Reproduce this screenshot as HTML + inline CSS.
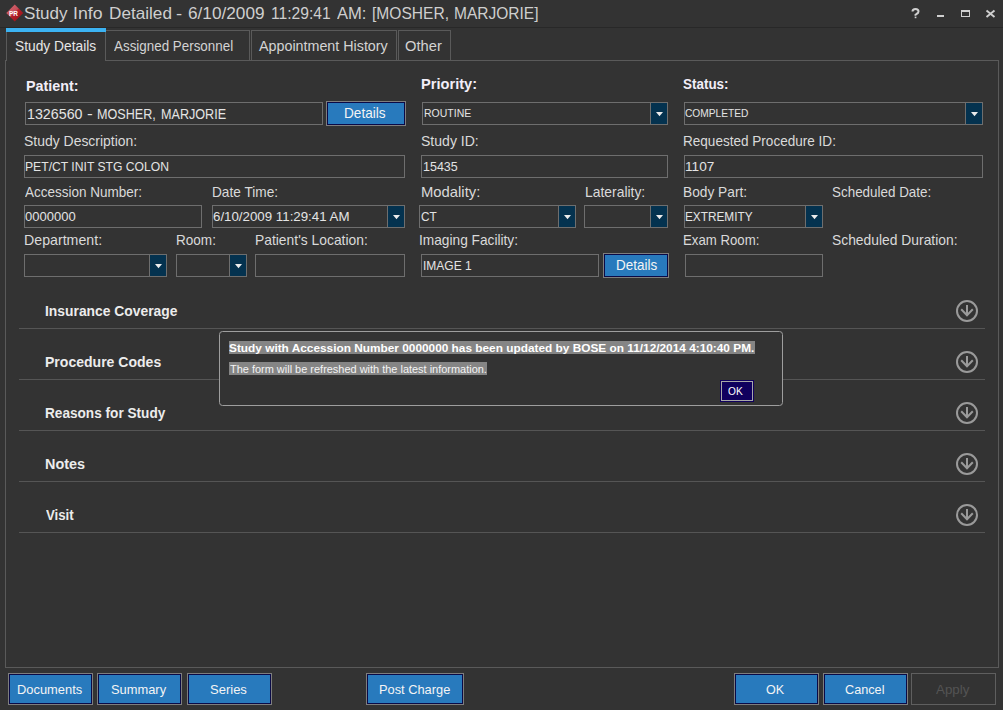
<!DOCTYPE html>
<html><head><meta charset="utf-8"><style>
html,body{margin:0;padding:0;}
body{width:1003px;height:710px;background:#333333;position:relative;overflow:hidden;font-family:"Liberation Sans", sans-serif;}
body>div,body>svg{position:absolute;}
.t{height:0;line-height:0;white-space:nowrap;transform-origin:0 0;}
.t span{display:inline-block;line-height:0;}
</style></head><body>
<div style="left:0px;top:0px;width:1003px;height:27px;background:#333333;"></div>
<div style="left:0px;top:27px;width:1003px;height:1px;background:#282828;"></div>
<div style="left:6px;top:28px;width:100px;height:4px;background:#3cb3f2;"></div>
<div style="left:6px;top:32px;width:1px;height:29px;background:#5a5a5a;"></div>
<div style="left:105px;top:32px;width:1px;height:29px;background:#5a5a5a;"></div>
<div style="left:106px;top:30px;width:144px;height:1px;background:#5a5a5a;"></div>
<div style="left:249px;top:30px;width:1px;height:31px;background:#5a5a5a;"></div>
<div style="left:251px;top:30px;width:146px;height:1px;background:#5a5a5a;"></div>
<div style="left:251px;top:30px;width:1px;height:31px;background:#5a5a5a;"></div>
<div style="left:396px;top:30px;width:1px;height:31px;background:#5a5a5a;"></div>
<div style="left:398px;top:30px;width:53px;height:1px;background:#5a5a5a;"></div>
<div style="left:398px;top:30px;width:1px;height:31px;background:#5a5a5a;"></div>
<div style="left:450px;top:30px;width:1px;height:31px;background:#5a5a5a;"></div>
<div style="left:106px;top:60px;width:893px;height:1px;background:#5a5a5a;"></div>
<div style="left:5px;top:60px;width:1px;height:608px;background:#5a5a5a;"></div>
<div style="left:998px;top:60px;width:1px;height:608px;background:#5a5a5a;"></div>
<div style="left:5px;top:667px;width:994px;height:1px;background:#5a5a5a;"></div>
<div style="left:25px;top:102px;width:298px;height:23px;border:1px solid #6e6e6e;box-sizing:border-box;"></div>
<div style="left:326px;top:101px;width:80px;height:25px;border:1px solid #7e7e7e;box-sizing:border-box;"></div>
<div style="left:327px;top:102px;width:78px;height:23px;border:1px solid #0a0a46;box-sizing:border-box;background:#287abd;"></div>
<div style="left:422px;top:102px;width:246px;height:23px;border:1px solid #6e6e6e;box-sizing:border-box;"></div>
<div style="left:651px;top:103px;width:16px;height:21px;background:#04324f;"></div>
<div style="left:650px;top:102px;width:1px;height:23px;background:#6e6e6e;"></div>
<svg style="position:absolute;left:655.8px;top:112px" width="7" height="5" viewBox="0 0 7 5"><path d="M0 0H7L3.5 4.2Z" fill="#ececec"/></svg>
<div style="left:684px;top:102px;width:299px;height:23px;border:1px solid #6e6e6e;box-sizing:border-box;"></div>
<div style="left:966px;top:103px;width:16px;height:21px;background:#04324f;"></div>
<div style="left:965px;top:102px;width:1px;height:23px;background:#6e6e6e;"></div>
<svg style="position:absolute;left:970.8px;top:112px" width="7" height="5" viewBox="0 0 7 5"><path d="M0 0H7L3.5 4.2Z" fill="#ececec"/></svg>
<div style="left:24px;top:155px;width:381px;height:23px;border:1px solid #6e6e6e;box-sizing:border-box;"></div>
<div style="left:421px;top:155px;width:247px;height:23px;border:1px solid #6e6e6e;box-sizing:border-box;"></div>
<div style="left:684px;top:155px;width:299px;height:23px;border:1px solid #6e6e6e;box-sizing:border-box;"></div>
<div style="left:24px;top:205px;width:178px;height:23px;border:1px solid #6e6e6e;box-sizing:border-box;"></div>
<div style="left:212px;top:205px;width:193px;height:23px;border:1px solid #6e6e6e;box-sizing:border-box;"></div>
<div style="left:388px;top:206px;width:16px;height:21px;background:#04324f;"></div>
<div style="left:387px;top:205px;width:1px;height:23px;background:#6e6e6e;"></div>
<svg style="position:absolute;left:392.8px;top:215px" width="7" height="5" viewBox="0 0 7 5"><path d="M0 0H7L3.5 4.2Z" fill="#ececec"/></svg>
<div style="left:419px;top:205px;width:157px;height:23px;border:1px solid #6e6e6e;box-sizing:border-box;"></div>
<div style="left:559px;top:206px;width:16px;height:21px;background:#04324f;"></div>
<div style="left:558px;top:205px;width:1px;height:23px;background:#6e6e6e;"></div>
<svg style="position:absolute;left:563.8px;top:215px" width="7" height="5" viewBox="0 0 7 5"><path d="M0 0H7L3.5 4.2Z" fill="#ececec"/></svg>
<div style="left:584px;top:205px;width:84px;height:23px;border:1px solid #6e6e6e;box-sizing:border-box;"></div>
<div style="left:651px;top:206px;width:16px;height:21px;background:#04324f;"></div>
<div style="left:650px;top:205px;width:1px;height:23px;background:#6e6e6e;"></div>
<svg style="position:absolute;left:655.8px;top:215px" width="7" height="5" viewBox="0 0 7 5"><path d="M0 0H7L3.5 4.2Z" fill="#ececec"/></svg>
<div style="left:684px;top:205px;width:139px;height:23px;border:1px solid #6e6e6e;box-sizing:border-box;"></div>
<div style="left:806px;top:206px;width:16px;height:21px;background:#04324f;"></div>
<div style="left:805px;top:205px;width:1px;height:23px;background:#6e6e6e;"></div>
<svg style="position:absolute;left:810.8px;top:215px" width="7" height="5" viewBox="0 0 7 5"><path d="M0 0H7L3.5 4.2Z" fill="#ececec"/></svg>
<div style="left:24px;top:254px;width:143px;height:23px;border:1px solid #6e6e6e;box-sizing:border-box;"></div>
<div style="left:150px;top:255px;width:16px;height:21px;background:#04324f;"></div>
<div style="left:149px;top:254px;width:1px;height:23px;background:#6e6e6e;"></div>
<svg style="position:absolute;left:154.8px;top:264px" width="7" height="5" viewBox="0 0 7 5"><path d="M0 0H7L3.5 4.2Z" fill="#ececec"/></svg>
<div style="left:176px;top:254px;width:71px;height:23px;border:1px solid #6e6e6e;box-sizing:border-box;"></div>
<div style="left:230px;top:255px;width:16px;height:21px;background:#04324f;"></div>
<div style="left:229px;top:254px;width:1px;height:23px;background:#6e6e6e;"></div>
<svg style="position:absolute;left:234.8px;top:264px" width="7" height="5" viewBox="0 0 7 5"><path d="M0 0H7L3.5 4.2Z" fill="#ececec"/></svg>
<div style="left:255px;top:254px;width:150px;height:23px;border:1px solid #6e6e6e;box-sizing:border-box;"></div>
<div style="left:421px;top:254px;width:178px;height:23px;border:1px solid #6e6e6e;box-sizing:border-box;"></div>
<div style="left:603px;top:253px;width:66px;height:25px;border:1px solid #7e7e7e;box-sizing:border-box;"></div>
<div style="left:604px;top:254px;width:64px;height:23px;border:1px solid #0a0a46;box-sizing:border-box;background:#287abd;"></div>
<div style="left:685px;top:254px;width:138px;height:23px;border:1px solid #6e6e6e;box-sizing:border-box;"></div>
<div style="left:19px;top:328px;width:966px;height:1px;background:#555555;"></div>
<svg style="position:absolute;left:955px;top:299px" width="24" height="24" viewBox="0 0 24 24"><circle cx="12" cy="12" r="10" fill="none" stroke="#9a9a9a" stroke-width="2"/><path d="M12 6V16.5M6.2 10.3L12 16.3L17.8 10.3" fill="none" stroke="#9a9a9a" stroke-width="2"/></svg>
<div style="left:19px;top:379px;width:966px;height:1px;background:#555555;"></div>
<svg style="position:absolute;left:955px;top:350px" width="24" height="24" viewBox="0 0 24 24"><circle cx="12" cy="12" r="10" fill="none" stroke="#9a9a9a" stroke-width="2"/><path d="M12 6V16.5M6.2 10.3L12 16.3L17.8 10.3" fill="none" stroke="#9a9a9a" stroke-width="2"/></svg>
<div style="left:19px;top:430px;width:966px;height:1px;background:#555555;"></div>
<svg style="position:absolute;left:955px;top:401px" width="24" height="24" viewBox="0 0 24 24"><circle cx="12" cy="12" r="10" fill="none" stroke="#9a9a9a" stroke-width="2"/><path d="M12 6V16.5M6.2 10.3L12 16.3L17.8 10.3" fill="none" stroke="#9a9a9a" stroke-width="2"/></svg>
<div style="left:19px;top:481px;width:966px;height:1px;background:#555555;"></div>
<svg style="position:absolute;left:955px;top:452px" width="24" height="24" viewBox="0 0 24 24"><circle cx="12" cy="12" r="10" fill="none" stroke="#9a9a9a" stroke-width="2"/><path d="M12 6V16.5M6.2 10.3L12 16.3L17.8 10.3" fill="none" stroke="#9a9a9a" stroke-width="2"/></svg>
<div style="left:19px;top:532px;width:966px;height:1px;background:#555555;"></div>
<svg style="position:absolute;left:955px;top:503px" width="24" height="24" viewBox="0 0 24 24"><circle cx="12" cy="12" r="10" fill="none" stroke="#9a9a9a" stroke-width="2"/><path d="M12 6V16.5M6.2 10.3L12 16.3L17.8 10.3" fill="none" stroke="#9a9a9a" stroke-width="2"/></svg>
<div style="left:219px;top:331px;width:564px;height:75px;box-sizing:border-box;border:1px solid #9e9e9e;border-radius:3.5px;background:#333333;"></div>
<div style="left:229px;top:341px;width:526px;height:13px;background:#858585;"></div>
<div style="left:229px;top:362px;width:258px;height:13px;background:#858585;"></div>
<div style="left:720px;top:380px;width:34px;height:22px;border:1px solid #10005e;box-sizing:border-box;background:#10005e;"></div>
<div style="left:721px;top:381px;width:32px;height:20px;border:1px solid #a8a8a8;box-sizing:border-box;"></div>
<div style="left:8px;top:673px;width:85px;height:32px;border:1px solid #7e7e7e;box-sizing:border-box;"></div>
<div style="left:9px;top:674px;width:83px;height:30px;border:1px solid #0a0a46;box-sizing:border-box;background:#287abd;"></div>
<div style="left:97px;top:673px;width:85px;height:32px;border:1px solid #7e7e7e;box-sizing:border-box;"></div>
<div style="left:98px;top:674px;width:83px;height:30px;border:1px solid #0a0a46;box-sizing:border-box;background:#287abd;"></div>
<div style="left:187px;top:673px;width:85px;height:32px;border:1px solid #7e7e7e;box-sizing:border-box;"></div>
<div style="left:188px;top:674px;width:83px;height:30px;border:1px solid #0a0a46;box-sizing:border-box;background:#287abd;"></div>
<div style="left:366px;top:673px;width:98px;height:32px;border:1px solid #7e7e7e;box-sizing:border-box;"></div>
<div style="left:367px;top:674px;width:96px;height:30px;border:1px solid #0a0a46;box-sizing:border-box;background:#287abd;"></div>
<div style="left:734px;top:673px;width:85px;height:32px;border:1px solid #7e7e7e;box-sizing:border-box;"></div>
<div style="left:735px;top:674px;width:83px;height:30px;border:1px solid #0a0a46;box-sizing:border-box;background:#287abd;"></div>
<div style="left:823px;top:673px;width:85px;height:32px;border:1px solid #7e7e7e;box-sizing:border-box;"></div>
<div style="left:824px;top:674px;width:83px;height:30px;border:1px solid #0a0a46;box-sizing:border-box;background:#287abd;"></div>
<div style="left:911px;top:673px;width:85px;height:32px;border:1px solid #5f5f5f;box-sizing:border-box;"></div>
<svg style="position:absolute;left:900px;top:0px" width="103" height="27" viewBox="0 0 103 27"><path d="M12.5 11.5Q12.5 9 15.5 9Q18.5 9 18.5 11.5Q18.5 13 16.5 14L15.5 14.7V15.8" fill="none" stroke="#d0d0d0" stroke-width="2"/><rect x="14.7" y="16.6" width="1.7" height="1.6" fill="#d0d0d0"/><rect x="37" y="15" width="7" height="2" fill="#d0d0d0"/><rect x="61.5" y="10.5" width="8" height="6" fill="none" stroke="#d0d0d0" stroke-width="1"/><rect x="61" y="10" width="9" height="2" fill="#d0d0d0"/><path d="M86.5 10.5L94.5 17M94.5 10.5L86.5 17" stroke="#d0d0d0" stroke-width="1.9"/></svg>
<div style="left:9.25px;top:7.25px;width:11.5px;height:11.5px;transform:rotate(45deg);background:linear-gradient(90deg,#cc5a64 0%,#c44c58 42%,#b51f2a 52%,#a0171f 100%);"></div>
<div class="t" style="left:9px;top:13.6px;font-size:7.8px;color:#fff;font-weight:bold;transform:scaleX(0.82);"><span>PR</span></div>
<div class="t" style="left:24.00px;top:12.78px;font-size:16.5px;transform:scaleX(1.0341);color:#cfcfcf;"><span>Study</span></div>
<div class="t" style="left:73.00px;top:12.78px;font-size:16.5px;transform:scaleX(1.0716);color:#cfcfcf;"><span>Info</span></div>
<div class="t" style="left:109.00px;top:12.78px;font-size:16.5px;transform:scaleX(1.0399);color:#cfcfcf;"><span>Detailed</span></div>
<div class="t" style="left:176.00px;top:12.78px;font-size:16.5px;transform:scaleX(1.1191);color:#cfcfcf;"><span>-</span></div>
<div class="t" style="left:188.00px;top:12.78px;font-size:16.5px;transform:scaleX(1.0431);color:#cfcfcf;"><span>6/10/2009</span></div>
<div class="t" style="left:271.00px;top:12.78px;font-size:16.5px;transform:scaleX(0.9478);color:#cfcfcf;"><span>11:29:41</span></div>
<div class="t" style="left:337.00px;top:12.78px;font-size:16.5px;transform:scaleX(1.0042);color:#cfcfcf;"><span>AM:</span></div>
<div class="t" style="left:372.00px;top:12.78px;font-size:16.5px;transform:scaleX(0.9432);color:#cfcfcf;"><span>[MOSHER,</span></div>
<div class="t" style="left:454.00px;top:12.78px;font-size:16.5px;transform:scaleX(0.9403);color:#cfcfcf;"><span>MARJORIE]</span></div>
<div class="t" style="left:15.00px;top:45.54px;font-size:14.3px;transform:scaleX(0.9639);color:#e6e6e6;"><span>Study Details</span></div>
<div class="t" style="left:114.00px;top:45.54px;font-size:14.3px;transform:scaleX(0.9366);color:#d4d4d4;"><span>Assigned Personnel</span></div>
<div class="t" style="left:259.00px;top:45.54px;font-size:14.3px;transform:scaleX(1.0000);color:#d4d4d4;"><span>Appointment History</span></div>
<div class="t" style="left:405.00px;top:45.54px;font-size:14.3px;transform:scaleX(1.0286);color:#d4d4d4;"><span>Other</span></div>
<div class="t" style="left:26.00px;top:85.54px;font-size:14.3px;transform:scaleX(1.0012);color:#f2eef8;font-weight:bold;"><span>Patient:</span></div>
<div class="t" style="left:27.00px;top:113.54px;font-size:14.3px;transform:scaleX(0.9969);color:#e4e4e4;"><span>1326560</span></div>
<div class="t" style="left:87.00px;top:113.54px;font-size:14.3px;transform:scaleX(1.2073);color:#e4e4e4;"><span>-</span></div>
<div class="t" style="left:97.00px;top:113.54px;font-size:14.3px;transform:scaleX(0.8802);color:#e4e4e4;"><span>MOSHER,</span></div>
<div class="t" style="left:161.00px;top:113.54px;font-size:14.3px;transform:scaleX(0.8814);color:#e4e4e4;"><span>MARJORIE</span></div>
<div class="t" style="left:344.40px;top:112.54px;font-size:14.3px;transform:scaleX(0.9524);color:#f4f4f4;"><span>Details</span></div>
<div class="t" style="left:421.40px;top:83.54px;font-size:14.3px;transform:scaleX(1.0230);color:#f2eef8;font-weight:bold;"><span>Priority:</span></div>
<div class="t" style="left:423.60px;top:112.58px;font-size:11.3px;transform:scaleX(0.9292);color:#e4e4e4;"><span>ROUTINE</span></div>
<div class="t" style="left:683.00px;top:83.54px;font-size:14.3px;transform:scaleX(0.9395);color:#f2eef8;font-weight:bold;"><span>Status:</span></div>
<div class="t" style="left:685.00px;top:112.58px;font-size:11.3px;transform:scaleX(0.9026);color:#e4e4e4;"><span>COMPLETED</span></div>
<div class="t" style="left:24.20px;top:140.54px;font-size:14.3px;transform:scaleX(0.9760);color:#dadada;"><span>Study Description:</span></div>
<div class="t" style="left:25.20px;top:166.99px;font-size:13.0px;transform:scaleX(0.9347);color:#e4e4e4;"><span>PET/CT INIT STG COLON</span></div>
<div class="t" style="left:421.00px;top:140.54px;font-size:14.3px;transform:scaleX(0.9825);color:#dadada;"><span>Study ID:</span></div>
<div class="t" style="left:422.70px;top:166.99px;font-size:13.0px;transform:scaleX(0.9614);color:#e4e4e4;"><span>15435</span></div>
<div class="t" style="left:683.40px;top:140.54px;font-size:14.3px;transform:scaleX(0.9479);color:#dadada;"><span>Requested Procedure ID:</span></div>
<div class="t" style="left:685.00px;top:166.99px;font-size:13.0px;transform:scaleX(1.0483);color:#e4e4e4;"><span>1107</span></div>
<div class="t" style="left:25.20px;top:191.54px;font-size:14.3px;transform:scaleX(0.9449);color:#dadada;"><span>Accession Number:</span></div>
<div class="t" style="left:25.00px;top:216.99px;font-size:13.0px;transform:scaleX(1.0012);color:#e4e4e4;"><span>0000000</span></div>
<div class="t" style="left:212.40px;top:191.54px;font-size:14.3px;transform:scaleX(0.9552);color:#dadada;"><span>Date Time:</span></div>
<div class="t" style="left:213.00px;top:216.99px;font-size:13.0px;transform:scaleX(1.0226);color:#e4e4e4;"><span>6/10/2009 11:29:41 AM</span></div>
<div class="t" style="left:421.00px;top:191.54px;font-size:14.3px;transform:scaleX(1.0364);color:#dadada;"><span>Modality:</span></div>
<div class="t" style="left:421.10px;top:216.99px;font-size:13.0px;transform:scaleX(0.9064);color:#e4e4e4;"><span>CT</span></div>
<div class="t" style="left:584.50px;top:191.54px;font-size:14.3px;transform:scaleX(0.9717);color:#dadada;"><span>Laterality:</span></div>
<div class="t" style="left:683.40px;top:191.54px;font-size:14.3px;transform:scaleX(0.9604);color:#dadada;"><span>Body Part:</span></div>
<div class="t" style="left:685.20px;top:216.99px;font-size:13.0px;transform:scaleX(0.9074);color:#e4e4e4;"><span>EXTREMITY</span></div>
<div class="t" style="left:831.80px;top:191.54px;font-size:14.3px;transform:scaleX(0.9387);color:#dadada;"><span>Scheduled Date:</span></div>
<div class="t" style="left:24.40px;top:239.54px;font-size:14.3px;transform:scaleX(0.9925);color:#dadada;"><span>Department:</span></div>
<div class="t" style="left:175.50px;top:239.54px;font-size:14.3px;transform:scaleX(0.9475);color:#dadada;"><span>Room:</span></div>
<div class="t" style="left:254.90px;top:239.54px;font-size:14.3px;transform:scaleX(0.9689);color:#dadada;"><span>Patient's Location:</span></div>
<div class="t" style="left:419.40px;top:239.54px;font-size:14.3px;transform:scaleX(0.9585);color:#dadada;"><span>Imaging Facility:</span></div>
<div class="t" style="left:422.80px;top:265.99px;font-size:13.0px;transform:scaleX(0.9242);color:#e4e4e4;"><span>IMAGE 1</span></div>
<div class="t" style="left:615.60px;top:264.54px;font-size:14.3px;transform:scaleX(0.9411);color:#f4f4f4;"><span>Details</span></div>
<div class="t" style="left:683.00px;top:239.54px;font-size:14.3px;transform:scaleX(0.9239);color:#dadada;"><span>Exam Room:</span></div>
<div class="t" style="left:831.80px;top:239.54px;font-size:14.3px;transform:scaleX(0.9688);color:#dadada;"><span>Scheduled Duration:</span></div>
<div class="t" style="left:45.10px;top:310.54px;font-size:14.3px;transform:scaleX(0.9692);color:#ececec;font-weight:bold;"><span>Insurance Coverage</span></div>
<div class="t" style="left:44.80px;top:361.54px;font-size:14.3px;transform:scaleX(0.9816);color:#ececec;font-weight:bold;"><span>Procedure Codes</span></div>
<div class="t" style="left:44.80px;top:412.54px;font-size:14.3px;transform:scaleX(0.9524);color:#ececec;font-weight:bold;"><span>Reasons for Study</span></div>
<div class="t" style="left:44.80px;top:463.54px;font-size:14.3px;transform:scaleX(1.0070);color:#ececec;font-weight:bold;"><span>Notes</span></div>
<div class="t" style="left:45.80px;top:514.54px;font-size:14.3px;transform:scaleX(0.9253);color:#ececec;font-weight:bold;"><span>Visit</span></div>
<div class="t" style="left:228.50px;top:347.58px;font-size:11.3px;transform:scaleX(1.0480);color:#ffffff;font-weight:bold;"><span>Study with Accession Number 0000000 has been updated by BOSE on 11/12/2014 4:10:40 PM.</span></div>
<div class="t" style="left:229.50px;top:368.58px;font-size:11.3px;transform:scaleX(0.9696);color:#f4f4f4;"><span>The form will be refreshed with the latest information.</span></div>
<div class="t" style="left:728.40px;top:390.99px;font-size:10.6px;transform:scaleX(0.9579);color:#ffffff;"><span>OK</span></div>
<div class="t" style="left:16.50px;top:689.99px;font-size:13.0px;transform:scaleX(0.9912);color:#f4f4f4;"><span>Documents</span></div>
<div class="t" style="left:110.90px;top:689.99px;font-size:13.0px;transform:scaleX(0.9900);color:#f4f4f4;"><span>Summary</span></div>
<div class="t" style="left:210.00px;top:689.99px;font-size:13.0px;transform:scaleX(1.0008);color:#f4f4f4;"><span>Series</span></div>
<div class="t" style="left:378.50px;top:689.99px;font-size:13.0px;transform:scaleX(0.9863);color:#f4f4f4;"><span>Post Charge</span></div>
<div class="t" style="left:766.40px;top:689.99px;font-size:13.0px;transform:scaleX(0.9648);color:#f4f4f4;"><span>OK</span></div>
<div class="t" style="left:845.20px;top:689.99px;font-size:13.0px;transform:scaleX(0.9750);color:#f4f4f4;"><span>Cancel</span></div>
<div class="t" style="left:936.00px;top:689.99px;font-size:13.0px;transform:scaleX(1.0259);color:#545454;"><span>Apply</span></div>
</body></html>
